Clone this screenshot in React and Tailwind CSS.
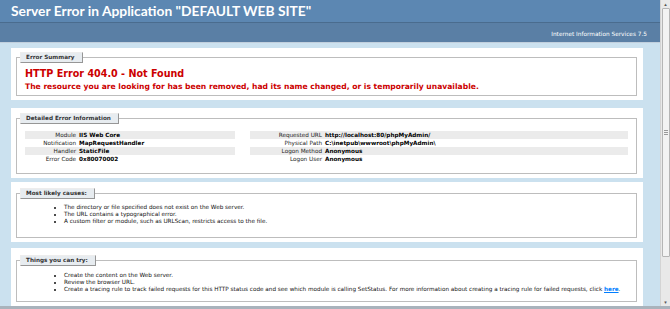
import React from 'react';

const leftRows = [
  ['Module', 'IIS Web Core'],
  ['Notification', 'MapRequestHandler'],
  ['Handler', 'StaticFile'],
  ['Error Code', '0x80070002'],
];

const rightRows = [
  ['Requested URL', 'http://localhost:80/phpMyAdmin/'],
  ['Physical Path', 'C:\\inetpub\\wwwroot\\phpMyAdmin\\'],
  ['Logon Method', 'Anonymous'],
  ['Logon User', 'Anonymous'],
];

function Legend({ children }) {
  return (
    <legend className="-ml-[5px] h-[11px] pl-[5px] pr-[7px] bg-[#E7ECF0] border-t border-l border-[#EDEDED] border-r-[#969696] border-b-[#969696] border-r border-b text-[5.7px] leading-[9px] font-bold text-[#333333]">
      {children}
    </legend>
  );
}

function DetailTable({ rows, labelWidth }) {
  return (
    <div className="flex flex-col">
      {rows.map(([label, value], i) => (
        <div key={label} className={`flex h-[8px] items-center ${i % 2 === 0 ? 'bg-[#ebebeb]' : ''}`}>
          <span className={`${labelWidth} shrink-0 text-right pr-[3px] text-[5.7px] text-[#222]`}>{label}</span>
          <span className="text-[5.7px] font-bold text-black whitespace-nowrap">{value}</span>
        </div>
      ))}
    </div>
  );
}

function Bullets({ items }) {
  return (
    <ul className="ml-[39px] list-disc text-[5.7px] leading-[7px] text-[#111]">
      {items.map((item, i) => (
        <li key={i} className="whitespace-nowrap">{item}</li>
      ))}
    </ul>
  );
}

export default function App() {
  return (
    <div className="w-[670px] h-[309px] overflow-hidden flex flex-col bg-[#CBE1EF]" style={{ fontFamily: '"DejaVu Sans", Verdana, sans-serif' }}>
      <div className="flex h-[306px]">
        <div className="w-[660px] flex flex-col">
          {/* Header */}
          <div className="h-[22px] bg-[#5C87B2] flex items-center pl-[11px]">
            <h1 className="text-[13.8px] font-bold text-white leading-none" style={{ fontFamily: 'Lato, "Open Sans", sans-serif' }}>
              Server Error in Application "DEFAULT WEB SITE"
            </h1>
          </div>
          <div className="h-[21px] bg-[#5A7FA5] border-t border-[#4A6C8E] border-b border-b-[#C1CFDD] flex items-center justify-end pr-[13px] pt-[4px]">
            <span className="text-[5.8px] text-white">Internet Information Services 7.5</span>
          </div>

          <div className="pl-[11px] w-[643px] flex flex-col">
            {/* Error Summary */}
            <div className="mt-[5px] h-[52px] bg-white pt-[4px] pl-[5px] pr-[6px]">
              <fieldset className="border border-[#bdbdbd] px-[8px] h-[44px]">
                <Legend>Error Summary</Legend>
                <h2 className="mt-[5px] text-[9.6px] leading-[11px] font-bold text-[#CC0000]">HTTP Error 404.0 - Not Found</h2>
                <h3 className="mt-[3px] text-[7.6px] leading-[9px] font-bold text-[#CC0000] whitespace-nowrap">
                  The resource you are looking for has been removed, had its name changed, or is temporarily unavailable.
                </h3>
              </fieldset>
            </div>

            {/* Detailed Error Information */}
            <div className="mt-[8px] h-[70px] bg-white pt-[5px] pl-[5px] pr-[6px]">
              <fieldset className="border border-[#bdbdbd] px-[8px] h-[61px]">
                <Legend>Detailed Error Information</Legend>
                <div className="mt-[7px] flex">
                  <div className="w-[210px]">
                    <DetailTable rows={leftRows} labelWidth="w-[54px]" />
                  </div>
                  <div className="ml-[15px] w-[378px]">
                    <DetailTable rows={rightRows} labelWidth="w-[75px]" />
                  </div>
                </div>
              </fieldset>
            </div>

            {/* Most likely causes */}
            <div className="mt-[4px] h-[60px] bg-white pt-[6px] pl-[5px] pr-[6px]">
              <fieldset className="border border-[#bdbdbd] px-[8px] h-[50px]">
                <Legend>Most likely causes:</Legend>
                <div className="mt-[5px]">
                  <Bullets
                    items={[
                      'The directory or file specified does not exist on the Web server.',
                      'The URL contains a typographical error.',
                      'A custom filter or module, such as URLScan, restricts access to the file.',
                    ]}
                  />
                </div>
              </fieldset>
            </div>

            {/* Things you can try */}
            <div className="mt-[6px] h-[58px] bg-white pt-[7px] pl-[5px] pr-[6px]">
              <fieldset className="border border-[#bdbdbd] px-[8px] h-[47px]">
                <Legend>Things you can try:</Legend>
                <div className="mt-[6px]">
                  <Bullets
                    items={[
                      'Create the content on the Web server.',
                      'Review the browser URL.',
                      <>
                        Create a tracing rule to track failed requests for this HTTP status code and see which module is calling SetStatus. For more information about creating a tracing rule for failed requests, click{' '}
                        <a href="#" className="font-bold text-[#007EFF] underline">here</a>.
                      </>,
                    ]}
                  />
                </div>
              </fieldset>
            </div>
          </div>
        </div>

        {/* Scrollbar */}
        <div className="w-[10px] bg-[#e9e9e9] border-l border-[#d4d4d4] flex flex-col items-center">
          <div className="h-[8px] flex items-center justify-center text-[5px] leading-none text-[#555]">▴</div>
          <div className="w-[8px] h-[249px] bg-[#f3f3f3] border border-[#b5b5b5] rounded-[1px] flex flex-col items-center justify-center gap-[1px]">
            <div className="w-[4px] h-px bg-[#9a9a9a]" />
            <div className="w-[4px] h-px bg-[#9a9a9a]" />
            <div className="w-[4px] h-px bg-[#9a9a9a]" />
          </div>
          <div className="flex-1" />
          <div className="h-[8px] flex items-center justify-center text-[5px] leading-none text-[#555]">▾</div>
        </div>
      </div>
      <div className="h-[3px] bg-[#a9b3bc]" />
    </div>
  );
}
